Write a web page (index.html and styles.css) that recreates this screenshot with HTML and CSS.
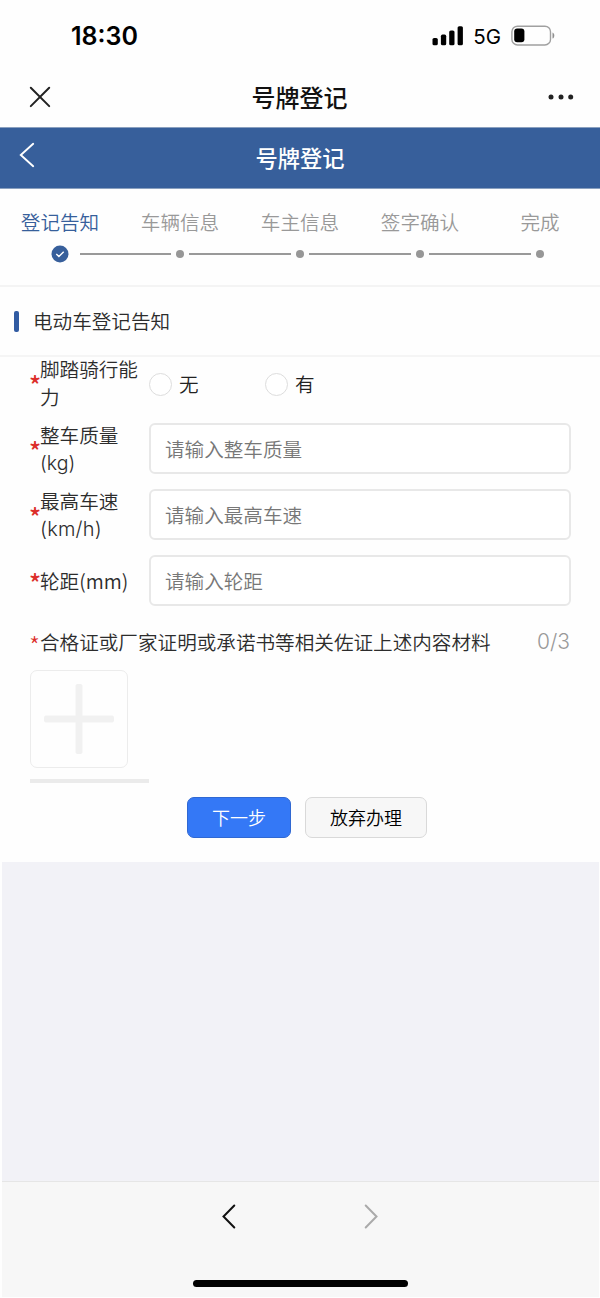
FILE: index.html
```html
<!DOCTYPE html>
<html lang="zh-CN">
<head>
<meta charset="utf-8">
<title>号牌登记</title>
<link rel="stylesheet" href="styles.css">
</head>
<body>
<div class="status">
  <span class="clock">18:30</span>
  <div class="status-right">
    <svg class="signal" width="32" height="20" viewBox="0 0 32 20"><rect x="0.5" y="12" width="5.3" height="7.3" rx="1.6"/><rect x="8.9" y="8.6" width="5.3" height="10.7" rx="1.6"/><rect x="17.2" y="4.4" width="5.3" height="14.9" rx="1.6"/><rect x="25.6" y="0.2" width="5.3" height="19.1" rx="1.6"/></svg>
    <span class="network">5G</span>
    <svg class="battery" width="45" height="22" viewBox="0 0 45 22"><rect x="0.9" y="1.2" width="38.6" height="18.8" rx="5.6" fill="none" stroke="#a0a0a0" stroke-width="1.4"/><rect x="3.2" y="3.6" width="10.2" height="13.6" rx="3" fill="#000"/><path d="M41.5 7.4c2.4.8 2.4 5.2 0 6.200z" fill="#909090"/></svg>
  </div>
</div>
<header class="nav">
  <svg width="22" height="22" viewBox="0 0 22 22"><path d="M1.800 1.700 20.200 20.100M20.200 1.700 1.800 20.100" fill="none" stroke="#222" stroke-width="2" stroke-linecap="round"/></svg>
  <h1 class="nav-title">号牌登记</h1>
  <svg width="26" height="6" viewBox="0 0 26 6"><g fill="#222"><circle cx="3" cy="3" r="2.500"/><circle cx="13" cy="3" r="2.500"/><circle cx="22.700" cy="3" r="2.500"/></g></svg>
</header>
<div class="banner">
  <svg width="16" height="26" viewBox="0 0 16 26"><path d="M14.200 1.800 1.800 13 14.200 24.200" fill="none" stroke="#fff" stroke-width="1.900" stroke-linecap="round"/></svg>
  <h2 class="banner-title">号牌登记</h2>
</div>
<ol class="steps">
  <li class="step active"><span>登记告知</span><div class="track"><i></i><svg width="18" height="18" viewBox="0 0 18 18"><circle cx="9" cy="9" r="8.500" fill="#375f9b"/><path d="m5.300 9 2.600 2.500 4.800-4.800" fill="none" stroke="#fff" stroke-width="1.400"/></svg><i class="line first"></i></div></li>
  <li class="step"><span>车辆信息</span><div class="track"><i class="line left"></i><b class="dot"></b><i class="line"></i></div></li>
  <li class="step"><span>车主信息</span><div class="track"><i class="line left"></i><b class="dot"></b><i class="line"></i></div></li>
  <li class="step"><span>签字确认</span><div class="track"><i class="line left"></i><b class="dot"></b><i class="line"></i></div></li>
  <li class="step"><span>完成</span><div class="track"><i class="line left"></i><b class="dot"></b><i></i></div></li>
</ol>
<div class="section"><span class="marker"></span>电动车登记告知</div>
<main class="form">
  <div class="fields">
    <div class="row"><span class="star">*</span><label class="label">脚踏骑行能力</label><div class="radios"><span class="radio"><i class="circle"></i>无</span><span class="radio"><i class="circle"></i>有</span></div></div>
    <div class="row"><span class="star">*</span><label class="label" for="mass">整车质量<span class="unit">(kg)</span></label><input class="input" id="mass" placeholder="请输入整车质量"></div>
    <div class="row"><span class="star">*</span><label class="label" for="speed">最高车速<span class="unit wide">(km/h)</span></label><input class="input" id="speed" placeholder="请输入最高车速"></div>
    <div class="row"><span class="star">*</span><label class="label" for="wheel">轮距(mm)</label><input class="input" id="wheel" placeholder="请输入轮距"></div>
  </div>
  <div class="upload-head"><span class="star thin">*</span><span>合格证或厂家证明或承诺书等相关佐证上述内容材料</span><span class="count">0/3</span></div>
  <div class="upload"><svg width="70" height="70" viewBox="0 0 70 70"><g fill="#f1f1f1"><rect x="31.500" width="7" height="70" rx="2"/><rect y="31.500" width="70" height="7" rx="2"/></g></svg></div>
  <div class="rule"></div>
  <div class="actions"><button class="btn primary">下一步</button><button class="btn plain">放弃办理</button></div>
</main>
<div class="backdrop"></div>
<footer class="toolbar">
  <div class="arrows">
    <svg width="14" height="25" viewBox="0 0 14 25"><path d="M12.300 1.500 1.500 12.500 12.300 23.500" fill="none" stroke="#111" stroke-width="2" stroke-linecap="round"/></svg>
    <svg width="14" height="25" viewBox="0 0 14 25"><path d="M1.700 1.500 12.500 12.500 1.700 23.500" fill="none" stroke="#aaa" stroke-width="2" stroke-linecap="round"/></svg>
  </div>
  <div class="home"></div>
</footer>
</body>
</html>
```
FILE: styles.css
```css
* { box-sizing: border-box; }
body {
  margin: 0;
  width: 600px;
  height: 1298px;
  overflow: hidden;
  display: flex;
  flex-direction: column;
  background: #fefefe;
  color: #2c2c2c;
  font: 350 19.6px/28px "Noto Sans CJK SC DemiLight", "Noto Sans CJK SC", sans-serif;
}
body > * { flex-shrink: 0; }
h1, h2, ol { margin: 0; padding: 0; }
svg { display: block; flex: none; }
.status { height: 66px; padding: 6px 44px 0 71px; display: flex; justify-content: space-between; align-items: center; color: #000; }
.clock { font: 600 25px/30px Inter, sans-serif; }
.status-right { display: flex; align-items: center; }
.signal { margin-right: -1px; }
.network { font: 400 20.500px/24px Inter, sans-serif; margin: 2px 10px 0 10px; }
.nav { height: 61px; padding: 0 26px 0 29px; display: grid; grid-template-columns: 22px 1fr 26px; align-items: center; }
.nav-title { font: 500 24px/34px "Noto Sans CJK SC", sans-serif; color: #111; text-align: center; }
.banner { height: 62px; padding: 0 20px 0 19px; display: grid; grid-template-columns: 16px 1fr 16px; align-items: center; background: #375f9b; border: solid #8aa0bf; border-width: 1px 0; color: #fff; }
.banner svg { margin-top: -6px; }
.banner-title { margin: -2px 0 0 1px; font: 500 22.300px/32px "Noto Sans CJK SC", sans-serif; text-align: center; }
.steps { height: 98px; padding-top: 19px; display: grid; grid-template-columns: repeat(5, 120px); list-style: none; border-bottom: 2px solid #f4f4f4; color: #999; text-align: center; }
.active { color: #375f9b; }
.step span { display: block; }
.track { height: 18px; margin-top: 9px; display: grid; grid-template-columns: 1fr auto 1fr; align-items: center; justify-items: stretch; }
.line { height: 2px; background: #999; margin-left: 5px; }
.line.left { margin: 0 5px 0 0; }
.line.first { margin-left: 11px; }
.dot { width: 8px; height: 8px; border-radius: 50%; background: #979797; }
.section { height: 70px; padding: 0 0 0 14px; display: flex; align-items: center; border-bottom: 2px solid #f5f5f5; }
.marker { width: 5px; height: 21px; border-radius: 2px; background: #315ba2; margin-right: 14px; }
.form { height: 505px; padding: 0 30px; display: flex; flex-direction: column; }
.fields { display: grid; grid-template-rows: 56px 56px 56px 56px; row-gap: 10px; margin-top: -2px; }
.row { display: grid; grid-template-columns: 10px 109px 422px; align-items: center; }
.star { margin: 1px 0 0 -1px; color: #dc2e2a; font-size: 25px; font-weight: 500; font-family: "Noto Sans CJK SC", sans-serif; }
.star.thin { width: 11px; margin-top: 3px; font-weight: 300; }
.label { width: 100px; }
.unit { display: block; font-family: Inter, sans-serif; font-size: 19.500px; font-weight: 300; }
.unit.wide { font-size: 20px; letter-spacing: 0.200px; }
.radios { display: flex; margin-top: 2px; }
.radio { width: 116px; display: flex; align-items: center; gap: 7px; color: #222; }
.circle { width: 23px; height: 23px; border: 1.500px solid #ddd; border-radius: 50%; background: #fff; }
.input { width: 422px; height: 51px; margin: 0 0 2px; padding: 0 14px; border: 2px solid #e8e8e8; border-radius: 6px; background: #fff; font: inherit; color: #333; outline: 0; }
.input::placeholder { color: #777; opacity: 1; }
.upload-head { display: flex; height: 28px; margin-top: 19px; }
.count { margin-left: auto; color: #999; font: 300 21px/28px Inter, sans-serif; }
.upload { width: 98px; height: 98px; margin-top: 14px; display: flex; align-items: center; justify-content: center; border: 1.500px solid #ececec; border-radius: 7px; }
.rule { width: 119px; height: 4px; margin-top: 11px; background: #ebebeb; }
.actions { display: flex; justify-content: center; gap: 14px; margin: 14px 0 0 14px; }
.btn { height: 41px; padding: 0 0 2px; border-radius: 7px; font: 350 18px/26px "Noto Sans CJK SC DemiLight", "Noto Sans CJK SC", sans-serif; }
.primary { width: 104px; border: 1px solid #3068d2; background: #3478f6; color: #fff; }
.plain { width: 122px; border: 1px solid #d9d9d9; background: #f7f7f7; color: #000; font-weight: 400; }
.backdrop { height: 319px; margin: 0 1px 0 2px; background: #f2f2f7; }
.toolbar { height: 116px; margin: 0 1px 0 2px; border-top: 1px solid #e6e6e6; background: #f7f7f7; display: flex; flex-direction: column; align-items: center; }
.arrows { width: 156px; margin: 22px 0 0 -1px; display: flex; justify-content: space-between; }
.home { width: 215px; height: 7px; margin-top: 51px; border-radius: 4px; background: #000; }
```
